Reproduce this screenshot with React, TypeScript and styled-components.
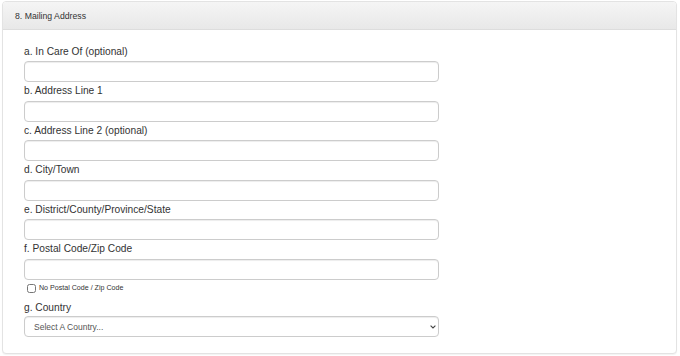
import styled, { createGlobalStyle } from "styled-components";

const GlobalStyle = createGlobalStyle`
    body {
        margin: 0;
        background: #fff;
        font-family: "Liberation Sans", Arial, sans-serif;
        color: #333;
    }
`;

const fields = [
    { id: "careOf", label: "a. In Care Of (optional)" },
    { id: "line1", label: "b. Address Line 1" },
    { id: "line2", label: "c. Address Line 2 (optional)" },
    { id: "city", label: "d. City/Town" },
    { id: "district", label: "e. District/County/Province/State" },
    { id: "postal", label: "f. Postal Code/Zip Code" },
];

const App = () => {
    return (
        <>
            <GlobalStyle />
            <Page>
                <Panel>
                    <PanelHeading>8. Mailing Address</PanelHeading>
                    <PanelBody>
                        {fields.map((field) => (
                            <FormGroup key={field.id}>
                                <Label htmlFor={field.id}>{field.label}</Label>
                                <TextInput id={field.id} type="text" />
                            </FormGroup>
                        ))}
                        <CheckRow>
                            <input type="checkbox" id="noPostal" />
                            <CheckLabel htmlFor="noPostal">
                                No Postal Code / Zip Code
                            </CheckLabel>
                        </CheckRow>
                        <FormGroup $last>
                            <Label htmlFor="country" $tight>
                                g. Country
                            </Label>
                            <SelectWrap>
                                <Select id="country" defaultValue="">
                                    <option value="">Select A Country...</option>
                                </Select>
                                <Chevron viewBox="0 0 6 4" aria-hidden="true">
                                    <path
                                        d="M0.6 0.6 L3 3 L5.4 0.6"
                                        fill="none"
                                        stroke="#444"
                                        strokeWidth="1.1"
                                    />
                                </Chevron>
                            </SelectWrap>
                        </FormGroup>
                    </PanelBody>
                </Panel>
            </Page>
        </>
    );
};

export default App;

const Page = styled.div`
    padding: 1px 3px 2px 2px;
`;

const Panel = styled.div`
    border: 1px solid #e3e3e3;
    border-radius: 4px;
    background: #fff;
    box-shadow: 0 1px 1px rgba(0, 0, 0, 0.05);
`;

const PanelHeading = styled.div`
    height: 28px;
    box-sizing: border-box;
    padding: 8px 12px 0;
    font-size: 8.7px;
    line-height: 12px;
    color: #333;
    background: linear-gradient(to bottom, #f5f5f5 0%, #e8e8e8 100%);
    border-bottom: 1px solid #dddddd;
    border-radius: 3px 3px 0 0;
`;

const PanelBody = styled.div`
    padding: 15.5px 21px 16px;
    width: 415px;
`;

const FormGroup = styled.div<{ $last?: boolean }>`
    display: flex;
    flex-direction: column;
    margin-bottom: ${(p) => (p.$last ? "0" : "3px")};
`;

const Label = styled.label<{ $tight?: boolean }>`
    font-size: 10.2px;
    line-height: 12px;
    margin-bottom: ${(p) => (p.$tight ? "2px" : "3.5px")};
`;

const TextInput = styled.input`
    height: 21px;
    box-sizing: border-box;
    border: 1px solid #ccc;
    border-radius: 4px;
    padding: 2px 10px;
    font-size: 9px;
    box-shadow: inset 0 1px 1px rgba(0, 0, 0, 0.075);
`;

const CheckRow = styled.div`
    display: flex;
    align-items: center;
    gap: 3px;
    height: 11px;
    margin: 1px 0 8.5px 3px;

    input {
        margin: 0;
        width: 9px;
        height: 9px;
    }
`;

const CheckLabel = styled.label`
    font-size: 7.1px;
    line-height: 11px;
`;

const SelectWrap = styled.div`
    position: relative;
    display: flex;
`;

const Select = styled.select`
    flex: 1;
    height: 21px;
    box-sizing: border-box;
    border: 1px solid #ccc;
    border-radius: 4px;
    padding: 0 9px;
    font-family: "Liberation Sans", Arial, sans-serif;
    font-size: 8.5px;
    color: #555;
    background: #fff;
    appearance: none;
    box-shadow: inset 0 1px 1px rgba(0, 0, 0, 0.075);
`;

const Chevron = styled.svg`
    position: absolute;
    right: 3px;
    top: 9px;
    width: 6px;
    height: 4px;
    pointer-events: none;
`;
